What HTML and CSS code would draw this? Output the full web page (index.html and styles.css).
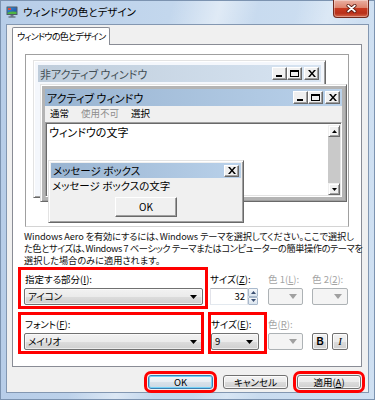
FILE: index.html
```html
<!DOCTYPE html>
<html lang="ja">
<head>
<meta charset="utf-8">
<title>ウィンドウの色とデザイン</title>
<link rel="stylesheet" href="styles.css">
</head>
<body>
<div class="window">
  <div class="titlebar">
    <svg class="appicon" width="12" height="12" viewBox="0 0 12 12">
      <defs>
        <linearGradient id="scr" x1="0" y1="0" x2="1" y2="1">
          <stop offset="0" stop-color="#2a9be0"/>
          <stop offset="0.55" stop-color="#2a64b8"/>
          <stop offset="1" stop-color="#1f4f8f"/>
        </linearGradient>
      </defs>
      <rect x="0.5" y="0.5" width="11" height="8.5" rx="0.5" fill="#4f5c69"/>
      <rect x="1.5" y="1.5" width="9" height="6.5" fill="url(#scr)"/>
      <path d="M1.5 6.8 Q5 4.6 10.5 5.8 V8 H1.5Z" fill="#4fb443"/>
      <rect x="2" y="2" width="3" height="2" fill="#e04a3a"/>
      <rect x="4.5" y="9" width="3" height="1.5" fill="#6b7580"/>
      <rect x="2.5" y="10.5" width="7" height="1" fill="#44505c"/>
    </svg>
    <span class="title">ウィンドウの色とデザイン</span>
    <div class="close">
      <svg width="11" height="9" viewBox="0 0 11 9">
        <path d="M2.2 1.6L8.8 7.4M8.8 1.6L2.2 7.4" stroke="#5a1c12" stroke-width="3.4" stroke-linecap="round"/>
        <path d="M2.2 1.6L8.8 7.4M8.8 1.6L2.2 7.4" stroke="#ffffff" stroke-width="1.9" stroke-linecap="round"/>
      </svg>
    </div>
  </div>

  <div class="client">
    <div class="tabs"><div class="tab">ウィンドウの色とデザイン</div></div>
    <div class="panel">
      <div class="preview">
        <div class="pwin inactive">
          <div class="cap">
            <span class="captext">非アクティブ ウィンドウ</span>
            <div class="cbs">
              <div class="cb"><svg width="9" height="7" viewBox="0 0 9 7" shape-rendering="crispEdges"><rect x="1" y="5" width="6" height="2"/></svg></div>
              <div class="cb"><svg width="9" height="7" viewBox="0 0 9 7" shape-rendering="crispEdges"><rect x="0" y="0" width="9" height="2"/><rect x="0" y="0" width="1" height="7"/><rect x="8" y="0" width="1" height="7"/><rect x="0" y="6" width="9" height="1"/></svg></div>
              <div class="cb gap"><svg width="8" height="7" viewBox="0 0 8 7"><path d="M0 0h2l2 2.4 2-2.4h2L5 3.5 8 7H6L4 4.6 2 7H0l3-3.5z"/></svg></div>
            </div>
          </div>
        </div>

        <div class="pwin active">
          <div class="cap">
            <span class="captext">アクティブ ウィンドウ</span>
            <div class="cbs">
              <div class="cb"><svg width="9" height="7" viewBox="0 0 9 7" shape-rendering="crispEdges"><rect x="1" y="5" width="6" height="2"/></svg></div>
              <div class="cb"><svg width="9" height="7" viewBox="0 0 9 7" shape-rendering="crispEdges"><rect x="0" y="0" width="9" height="2"/><rect x="0" y="0" width="1" height="7"/><rect x="8" y="0" width="1" height="7"/><rect x="0" y="6" width="9" height="1"/></svg></div>
              <div class="cb gap"><svg width="8" height="7" viewBox="0 0 8 7"><path d="M0 0h2l2 2.4 2-2.4h2L5 3.5 8 7H6L4 4.6 2 7H0l3-3.5z"/></svg></div>
            </div>
          </div>
          <div class="menu"><span>通常</span><span class="dim">使用不可</span><span>選択</span></div>
          <div class="wtext">
            <span class="wt">ウィンドウの文字</span>
            <div class="vscroll">
              <div class="sb"><svg width="5" height="3" viewBox="0 0 5 3"><path d="M0 3h5L2.5 0z"/></svg></div>
              <div class="track"></div>
              <div class="sb"><svg width="5" height="3" viewBox="0 0 5 3"><path d="M0 0h5L2.5 3z"/></svg></div>
            </div>
          </div>
        </div>

        <div class="msgbox">
          <div class="cap">
            <span class="captext">メッセージ ボックス</span>
            <div class="cbs">
              <div class="cb small"><svg width="8" height="7" viewBox="0 0 8 7"><path d="M0 0h2l2 2.4 2-2.4h2L5 3.5 8 7H6L4 4.6 2 7H0l3-3.5z"/></svg></div>
            </div>
          </div>
          <div class="mtext">メッセージ ボックスの文字</div>
          <div class="okbtn">OK</div>
        </div>
      </div>

      <p class="desc"><span class="dl l1">Windows Aero を有効にするには、Windows テーマを選択してください。ここで選択し</span><span class="dl l2">た色とサイズは、Windows 7 ベーシック テーマまたはコンピューターの簡単操作のテーマを</span><span class="dl l3">選択した場合のみに適用されます。</span></p>

      <div class="row row1">
        <div class="box b1">
          <div class="lbl ind">指定する部分(<u>I</u>):</div>
          <div class="combo w179"><span>アイコン</span><svg width="7" height="4" viewBox="0 0 7 4"><path d="M0 0h7L3.5 4z"/></svg></div>
        </div>
        <div class="fld f-size">
          <div class="lbl">サイズ(<u>Z</u>):</div>
          <div class="spin">
            <div class="txt">32</div>
            <div class="btns">
              <div><svg width="5" height="3" viewBox="0 0 5 3"><path d="M0 3h5L2.5 0z"/></svg></div>
              <div><svg width="5" height="3" viewBox="0 0 5 3"><path d="M0 0h5L2.5 3z"/></svg></div>
            </div>
          </div>
        </div>
        <div class="fld f-c1">
          <div class="lbl gray">色 1(<u>L</u>):</div>
          <div class="combo dis"><span></span><svg width="8" height="5" viewBox="0 0 8 5"><path d="M0 0h8L4 5z"/></svg></div>
        </div>
        <div class="fld f-c2">
          <div class="lbl gray">色 2(<u>2</u>):</div>
          <div class="combo dis"><span></span><svg width="8" height="5" viewBox="0 0 8 5"><path d="M0 0h8L4 5z"/></svg></div>
        </div>
      </div>

      <div class="row row2">
        <div class="box b2">
          <div class="lbl ind">フォント(<u>F</u>):</div>
          <div class="combo w179"><span>メイリオ</span><svg width="7" height="4" viewBox="0 0 7 4"><path d="M0 0h7L3.5 4z"/></svg></div>
        </div>
        <div class="box b3">
          <div class="lbl">サイズ(<u>E</u>):</div>
          <div class="combo w48"><span>9</span><svg width="7" height="4" viewBox="0 0 7 4"><path d="M0 0h7L3.5 4z"/></svg></div>
        </div>
        <div class="fld f-cr">
          <div class="lbl gray">色(<u>R</u>):</div>
          <div class="combo dis"><span></span><svg width="8" height="5" viewBox="0 0 8 5"><path d="M0 0h8L4 5z"/></svg></div>
        </div>
        <div class="fmt">
          <div class="fbtn bold">B</div>
          <div class="fbtn ital">I</div>
        </div>
      </div>
    </div>

    <div class="buttons">
      <div class="btn def red">OK</div>
      <div class="btn">キャンセル</div>
      <div class="btn apply red">適用(<u>A</u>)</div>
    </div>
  </div>
</div>
</body>
</html>
```

FILE: styles.css
```css
* { box-sizing: border-box; }
html, body { margin: 0; padding: 0; }
body {
  width: 375px;
  height: 400px;
  overflow: hidden;
  font-family: "Noto Sans CJK JP", "Noto Sans", sans-serif;
  font-size: 9.5px;
  line-height: 13px;
  color: #000;
  font-feature-settings: "palt";
  background: #fff;
}

/* Aero frame */
.window {
  width: 375px;
  height: 400px;
  display: flex;
  flex-direction: column;
  background:
    linear-gradient(105deg, rgba(255,255,255,0) 36%, rgba(255,255,255,.45) 46%, rgba(255,255,255,0) 54%, rgba(255,255,255,0) 62%, rgba(255,255,255,.3) 69%, rgba(255,255,255,0) 76%),
    linear-gradient(to right, #b7cde8, #c3d7ed 45%, #cfe0f2);
  box-shadow: inset 0 0 0 1px #7c93b0;
}
.titlebar {
  height: 24px;
  display: flex;
  align-items: flex-start;
  flex-shrink: 0;
}
.appicon { margin: 6px 0 0 6px; flex-shrink: 0; }
.title {
  margin: 5px 0 0 5px;
  font-size: 10.5px;
  line-height: 14px;
  color: #000;
}
.close {
  margin-left: auto;
  margin-right: 6px;
  width: 36px;
  height: 18px;
  border: 1px solid #70291d;
  border-top: none;
  border-radius: 0 0 4px 4px;
  background: linear-gradient(#eab0a2, #de8670 44%, #c8391f 50%, #b8301a 78%, #d5674a);
  box-shadow: inset 0 0 0 1px rgba(255,255,255,.35);
  display: flex;
  align-items: center;
  justify-content: center;
}

.client {
  margin: 0 6px;
  height: 369px;
  flex-shrink: 0;
  border: 1px solid #8397b1;
  background: #f0f0f0;
  padding: 2px 6px 0 5px;
}

/* Tab */
.tabs { height: 17px; }
.tab {
  position: relative;
  z-index: 1;
  width: 98px;
  height: 18px;
  border: 1px solid #898c95;
  border-bottom: none;
  border-radius: 2px 2px 0 0;
  background: #fff;
  padding: 2px 0 0 4px;
  font-size: 9px;
  letter-spacing: -0.7px;
  line-height: 13px;
  white-space: nowrap;
  overflow: hidden;
}
.panel {
  height: 323px;
  border: 1px solid #898c95;
  background: #fff;
  padding-top: 9px;
}

/* Preview */
.preview {
  position: relative;
  margin-left: 12px;
  width: 324px;
  height: 173px;
  border: 1px solid;
  border-color: #a0a0a0 #a0a0a0 #d4d4d4 #a0a0a0;
  background: #fff;
  overflow: hidden;
}
.pwin, .msgbox {
  position: absolute;
  display: flex;
  flex-direction: column;
  border: 1px solid;
  border-color: #e3e3e3 #696969 #696969 #e3e3e3;
  box-shadow: inset 1px 1px #fff, inset -1px -1px #a0a0a0;
}
.pwin { padding: 4px; }
.inactive {
  left: 7px;
  top: 5px;
  width: 293px;
  height: 138px;
  background: #f4f7fc;
}
.active {
  left: 14px;
  top: 29px;
  width: 307px;
  height: 118px;
  background: #b4b4b4;
}
.cap {
  height: 17px;
  flex-shrink: 0;
  display: flex;
  align-items: center;
  padding-left: 2px;
  font-size: 11px;
  line-height: 14px;
  white-space: nowrap;
}
.inactive .cap { background: linear-gradient(to right, #bfcddb, #d7e4f2); color: #434e54; }
.active .cap, .msgbox .cap { background: linear-gradient(to right, #99b4d1, #b9d1ea); color: #000; }
.cbs { margin-left: auto; margin-right: 2px; display: flex; }
.cb {
  width: 15px;
  height: 13px;
  border: 1px solid;
  border-color: #fff #696969 #696969 #fff;
  box-shadow: inset -1px -1px #a0a0a0;
  background: #f0f0f0;
  display: flex;
  align-items: center;
  justify-content: center;
}
.cb.gap { margin-left: 2px; }
.cb.small { height: 12px; }

.menu {
  height: 16px;
  flex-shrink: 0;
  display: flex;
  gap: 12px;
  padding-left: 5px;
  line-height: 15px;
  background: #f0f0f0;
}
.menu .dim { color: #8d8d8d; }
.wtext {
  flex: 1;
  display: flex;
  border: 1px solid;
  border-color: #a0a0a0 #fff #fff #a0a0a0;
  box-shadow: inset 1px 1px #696969, inset -1px -1px #e3e3e3;
  background: #fff;
  padding: 2px 1px 1px 2px;
}
.wt { flex: 1; font-size: 11px; line-height: 14px; padding-left: 1px; }
.vscroll { width: 12px; display: flex; flex-direction: column; }
.sb {
  height: 12px;
  border: 1px solid;
  border-color: #f0f0f0 #696969 #696969 #f0f0f0;
  box-shadow: inset 1px 1px #fff, inset -1px -1px #a0a0a0;
  background: #f0f0f0;
  display: flex;
  align-items: center;
  justify-content: center;
}
.track { flex: 1; background: #c9c9c9; }

.msgbox {
  left: 22px;
  top: 105px;
  width: 196px;
  height: 63px;
  background: #f0f0f0;
  padding: 2px;
}
.msgbox .cap { height: 15px; font-size: 10.5px; }
.mtext { margin-top: 1px; padding-left: 1px; font-size: 10.5px; line-height: 14px; white-space: nowrap; }
.okbtn {
  width: 62px;
  height: 20px;
  margin: 4px auto 0;
  border: 1px solid;
  border-color: #fff #696969 #696969 #fff;
  box-shadow: inset -1px -1px #a0a0a0;
  background: #f0f0f0;
  text-align: center;
  line-height: 18px;
  font-size: 10px;
}

/* Description */
.desc {
  margin: 3px 0 0 11px;
  font-size: 9.2px;
  line-height: 12px;
  white-space: nowrap;
  color: #111;
}
.dl { display: block; height: 12px; }
.l1 { letter-spacing: -0.1px; }
.l2 { letter-spacing: -0.4px; }

/* Control rows */
.row { display: flex; height: 42px; margin-left: 5px; }
.row1 { margin-top: 1px; }
.row2 { margin-top: 3px; }
.box {
  position: relative;
  height: 42px;
  display: flex;
  flex-direction: column;
  padding: 6px 0 0 6px;
}
.box::after {
  content: "";
  position: absolute;
  inset: 0;
  border: 3px solid #ff0000;
  pointer-events: none;
}
.b1 { width: 190px; }
.b2 { width: 186px; }
.b3 { width: 59px; margin-left: 4px; padding-left: 3px; }
.fld { display: flex; flex-direction: column; padding-top: 6px; }
.f-size { width: 48px; margin-left: 2px; }
.f-c1 { width: 35px; margin-left: 10px; }
.f-c2 { width: 36px; margin-left: 9px; }
.f-cr { width: 35px; margin-left: 1px; }
.lbl { height: 13px; line-height: 13px; white-space: nowrap; }
.lbl.ind { padding-left: 1px; }
.lbl.gray { color: #a3a3a3; }

.combo {
  position: relative;
  z-index: 0;
  margin-top: 2px;
  height: 17px;
  display: flex;
  align-items: center;
  border: 1px solid #707070;
  border-radius: 2px;
  background: linear-gradient(#f2f2f2, #ebebeb 50%, #dddddd 50%, #cfcfcf);
  box-shadow: inset 0 0 0 1px rgba(255,255,255,.6);
  padding-left: 3px;
}
.combo span { flex: 1; line-height: 15px; white-space: nowrap; }
.combo svg { margin-right: 5px; flex-shrink: 0; }
.w179 { width: 179px; }
.w48 { width: 48px; }
.combo.dis {
  border-color: #adb2b5;
  background: #f4f4f4;
  box-shadow: none;
}
.combo.dis svg { fill: #a0a0a0; margin-right: 5px; }

.spin { margin-top: 2px; height: 17px; display: flex; }
.spin .txt {
  flex: 1;
  border: 1px solid;
  border-color: #abadb3 #dbdfe6 #e3e9ef #e2e3ea;
  background: #fff;
  text-align: right;
  padding-right: 2px;
  line-height: 15px;
}
.spin .btns { width: 10px; display: flex; flex-direction: column; }
.spin .btns div {
  flex: 1;
  border: 1px solid #a9b9cc;
  border-radius: 1px;
  background: linear-gradient(#f5f8fb, #dbe5ef);
  display: flex;
  align-items: center;
  justify-content: center;
  fill: #3b4f72;
}

.fmt { display: flex; gap: 4px; margin-left: 9px; padding-top: 21px; }
.fbtn {
  width: 16px;
  height: 17px;
  border: 1px solid #707070;
  border-radius: 2px;
  background: linear-gradient(#f2f2f2, #ebebeb 50%, #dddddd 50%, #cfcfcf);
  box-shadow: inset 0 0 0 1px rgba(255,255,255,.7);
  text-align: center;
  line-height: 15px;
  font-family: "Liberation Sans", sans-serif;
  font-size: 10px;
}
.fbtn.bold { font-weight: bold; }
.fbtn.ital { font-style: italic; font-family: "Liberation Serif", serif; font-size: 11px; }

/* Dialog buttons */
.buttons {
  display: flex;
  justify-content: flex-end;
  margin-top: 8px;
  padding-right: 1px;
}
.btn {
  width: 65px;
  height: 14px;
  border: 1px solid #707070;
  border-radius: 3px;
  background: linear-gradient(#f2f2f2, #ebebeb 50%, #dddddd 50%, #cfcfcf);
  box-shadow: inset 0 0 0 1px rgba(255,255,255,.8);
  text-align: center;
  line-height: 12px;
  white-space: nowrap;
}
.btn + .btn { margin-left: 10px; }
.btn.apply { width: 64px; margin-left: 9px; }
.btn.def {
  border-color: #3c7fb1;
  box-shadow: inset 0 0 0 1px #74d2f8;
  background: linear-gradient(#f3f6f9, #e7edf3 50%, #d9e2ea 50%, #ccd8e3);
}
.btn.red { outline: 3px solid #ff0000; outline-offset: 1px; }
```
